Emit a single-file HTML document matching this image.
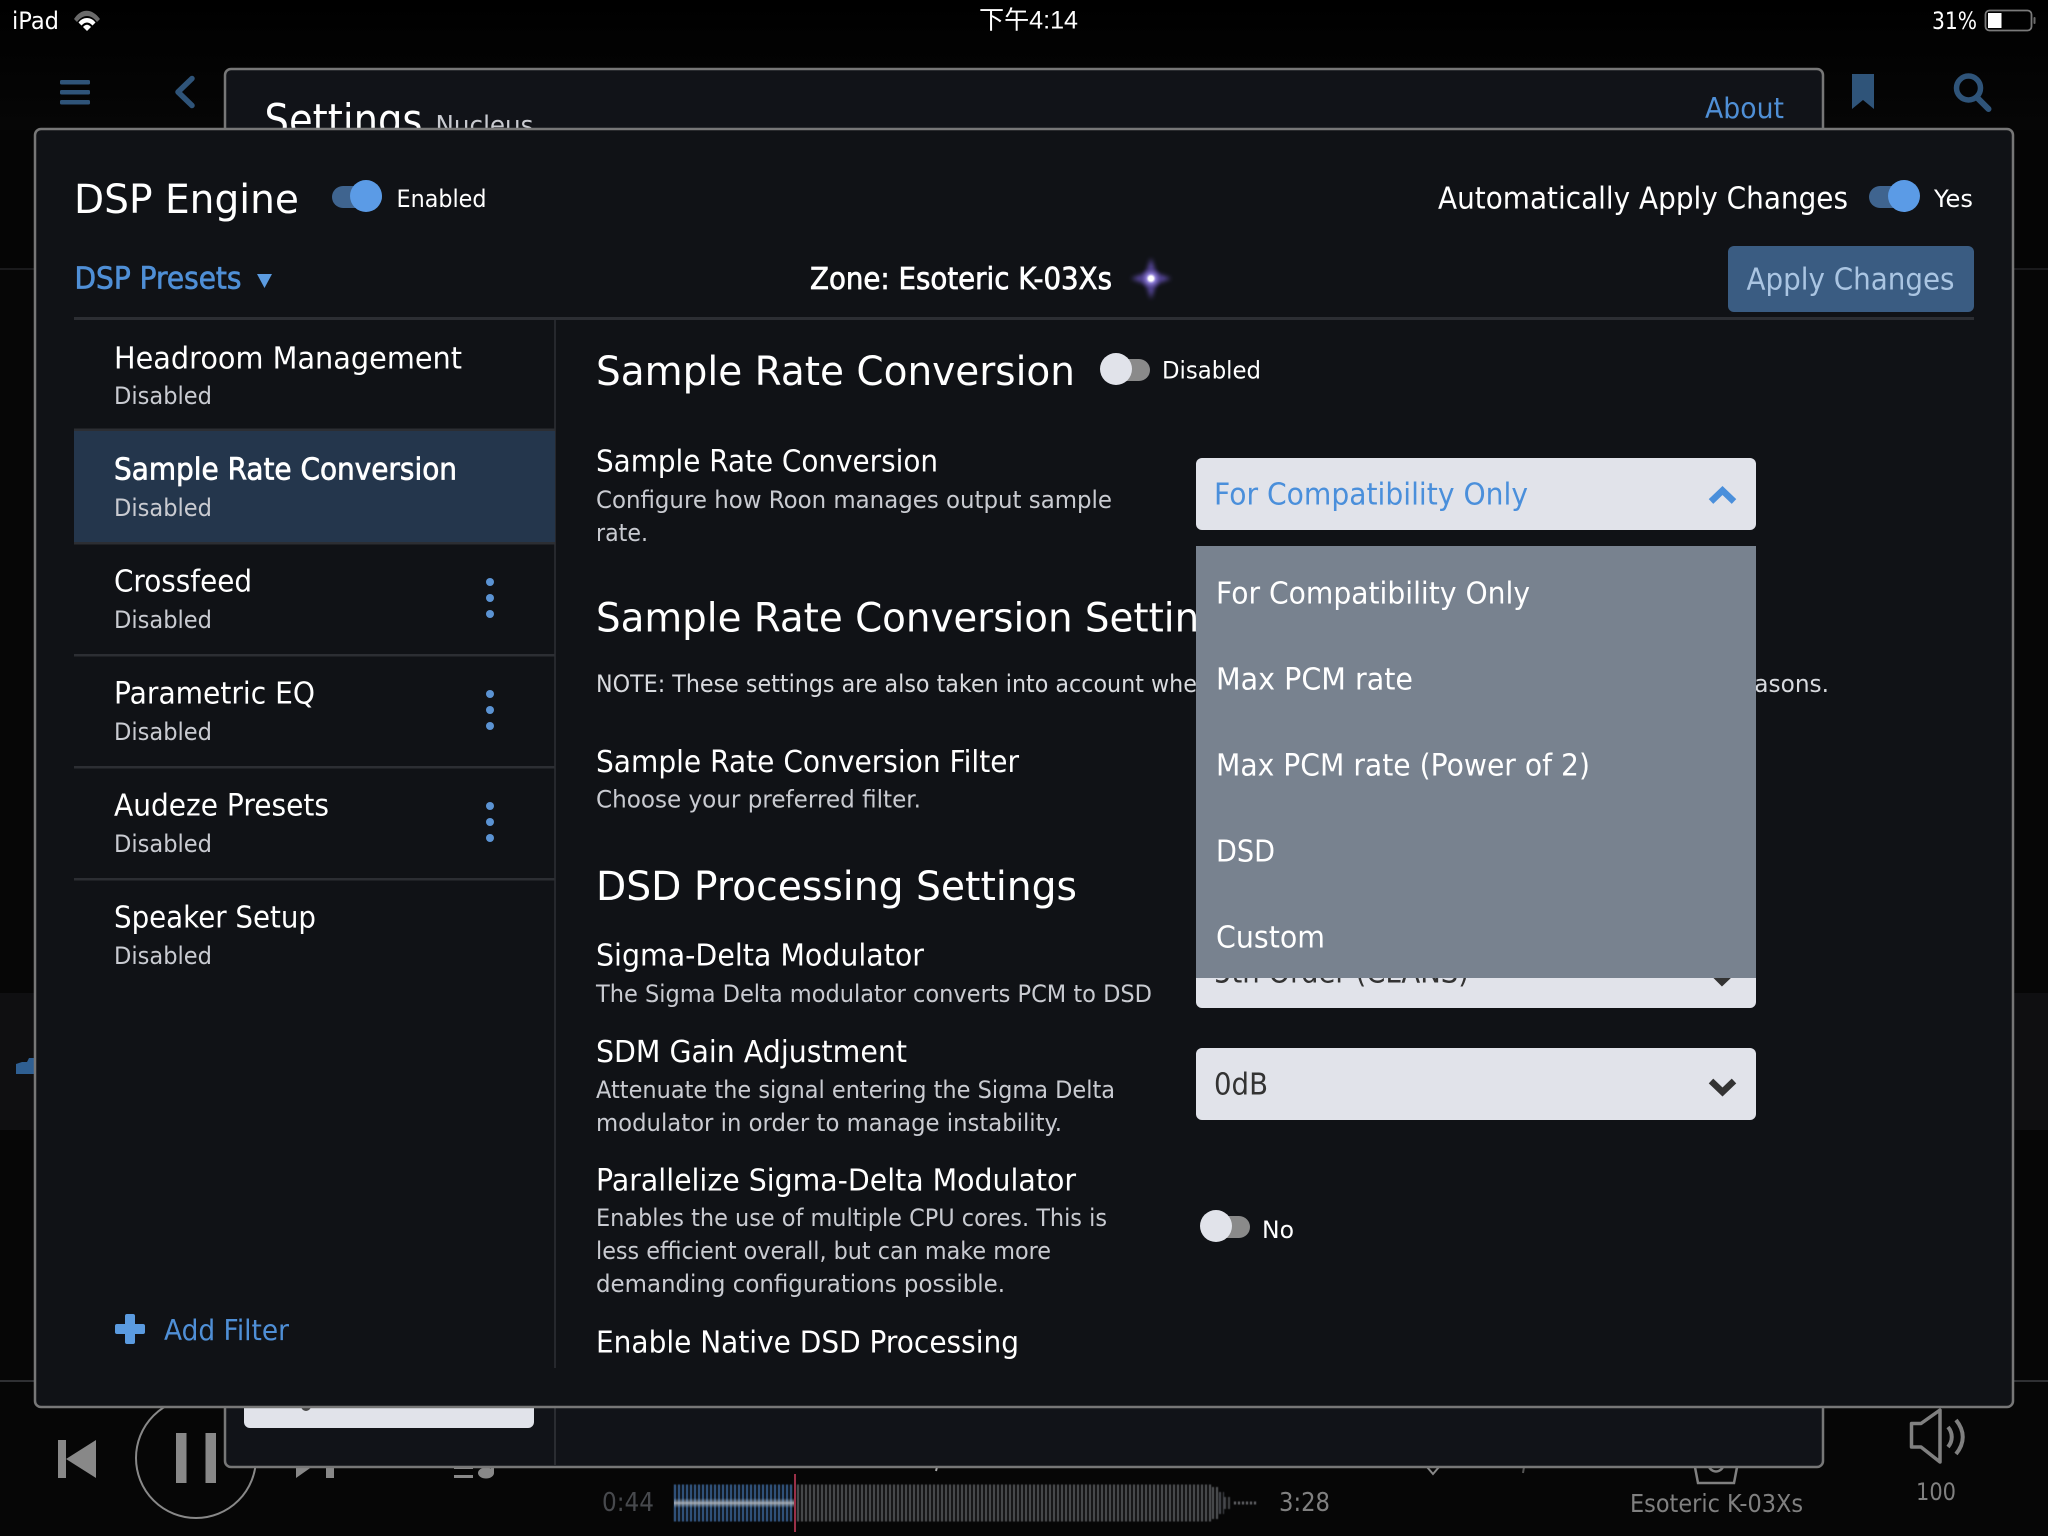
<!DOCTYPE html>
<html><head><meta charset="utf-8"><title>DSP Engine</title>
<style>
html,body{margin:0;padding:0;background:#060606;width:2048px;height:1536px;overflow:hidden}
svg{display:block}
text{font-family:"DejaVu Sans","Noto Sans CJK SC",sans-serif;fill:#fff}
.h{font-size:40px}.t{font-size:30px;transform:translateY(.6px)}.d{font-size:24px;fill:#c9cbd1}.s{font-size:24px}
.b{fill:#4f8fd6}
.m{font-size:30px;fill:#fff;transform:translateY(.6px)}
</style></head><body>
<svg width="2048" height="1536" viewBox="0 0 2048 1536" xmlns="http://www.w3.org/2000/svg">
<defs>
<linearGradient id="top" x1="0" y1="0" x2="0" y2="1"><stop offset="0" stop-color="#000"/><stop offset="1" stop-color="#060606"/></linearGradient>
<radialGradient id="star"><stop offset="0" stop-color="#fff"/><stop offset=".2" stop-color="#fff"/><stop offset=".4" stop-color="#8f7fd8" stop-opacity=".9"/><stop offset="1" stop-color="#2a1f55" stop-opacity="0"/></radialGradient>
<filter id="soft" x="-50%" y="-50%" width="200%" height="200%"><feGaussianBlur stdDeviation="2.500"/></filter>
<filter id="bar" filterUnits="userSpaceOnUse" x="660" y="1470" width="620" height="70"><feGaussianBlur stdDeviation="0.400"/></filter>
<linearGradient id="glow" x1="0" y1="0" x2="0" y2="1"><stop offset="0" stop-color="#8fa9c4" stop-opacity="0"/><stop offset=".5" stop-color="#b8bcc0" stop-opacity=".85"/><stop offset="1" stop-color="#8fa9c4" stop-opacity="0"/></linearGradient>
<clipPath id="settingsClip"><rect x="228" y="72" width="1592" height="56"/></clipPath>
</defs>
<rect width="2048" height="1536" fill="#060606"/>
<rect width="2048" height="130" fill="url(#top)"/>
<rect x="0" y="130" width="2048" height="138" fill="#050505"/>
<rect x="0" y="268" width="2048" height="2" fill="#1a1a1c"/>
<rect x="0" y="993" width="2048" height="137" fill="#0f0f11"/>
<path d="M16 1074V1064L22 1062L27 1062L29 1058L34 1058V1074Z" fill="#2f5f92"/>
<rect x="0" y="1380" width="2048" height="2" fill="#2f3033"/>

<!-- status bar -->
<text x="12" y="29" style="font-size:24px" textLength="47" lengthAdjust="spacingAndGlyphs">iPad</text>
<path d="M74 19C81 8 92 8 100 19L97 22C91 14 83 14 77 22Z" fill="#6a6a6a"/>
<path d="M78.500 22.500C83 16.500 91 16.500 95.500 22.500L92.500 25.500C89 21.500 85 21.500 81.500 25.500Z" fill="#fff"/>
<path d="M83 27C85.500 24 88.500 24 91 27L87 31Z" fill="#fff"/>
<text x="979" y="28.500" style="font-size:25px;font-family:'Liberation Sans','Noto Sans CJK SC',sans-serif" textLength="99" lengthAdjust="spacingAndGlyphs">下午4:14</text>
<text x="1932" y="29" style="font-size:24px" textLength="45" lengthAdjust="spacingAndGlyphs">31%</text>
<rect x="1985.500" y="10.500" width="46" height="20" rx="4" fill="none" stroke="#7a7a7a" stroke-width="1.800"/>
<rect x="1988" y="13" width="13.500" height="15" fill="#fff"/>
<rect x="2033.500" y="17" width="2" height="7" rx="1" fill="#6a6a6a"/>

<!-- top bar icons -->
<g fill="#2f5479"><rect x="60" y="80" width="30" height="4.500" rx="1.500"/><rect x="60" y="90" width="30" height="4.500" rx="1.500"/><rect x="60" y="100" width="30" height="4.500" rx="1.500"/></g>
<path d="M192 78.500L178 92L192 105.500" fill="none" stroke="#2f5479" stroke-width="5.500" stroke-linecap="round" stroke-linejoin="round"/>
<path d="M1852 74H1874V109L1863 100L1852 109Z" fill="#2f5479"/>
<circle cx="1968.500" cy="88" r="12" fill="none" stroke="#2f5479" stroke-width="5.500"/>
<path d="M1977.500 98L1988.500 109" stroke="#2f5479" stroke-width="6" stroke-linecap="round"/>

<!-- bottom bar (behind) -->
<g fill="#888"><rect x="58" y="1440" width="8" height="38"/><path d="M96 1440V1478L66 1459Z"/></g>
<circle cx="196" cy="1458" r="60" fill="none" stroke="#888" stroke-width="2"/>
<g fill="#888"><rect x="176" y="1433" width="10.500" height="50"/><rect x="205.500" y="1433" width="10.500" height="50"/></g>
<path d="M296 1440V1478L323 1459Z M326 1440H334V1478H326Z" fill="#888"/>
<g fill="#888"><rect x="454" y="1466" width="19" height="3"/><rect x="454" y="1475" width="19" height="3"/><ellipse cx="486" cy="1473" rx="8" ry="5.500"/><rect x="491" y="1464" width="3" height="9"/></g>
<text x="602" y="1511" style="font-size:25.500px;fill:#47494d" textLength="52" lengthAdjust="spacingAndGlyphs">0:44</text>
<g filter="url(#bar)">
<line x1="674" y1="1503" x2="794" y2="1503" stroke="#3a6496" stroke-width="37" stroke-dasharray="2 2"/>
<line x1="797" y1="1503" x2="1212" y2="1503" stroke="#56585c" stroke-width="37" stroke-dasharray="2 2"/>
<line x1="1212" y1="1503" x2="1219" y2="1503" stroke="#56585c" stroke-width="32" stroke-dasharray="2 2"/>
<line x1="1219" y1="1503" x2="1224" y2="1503" stroke="#4c4e52" stroke-width="22" stroke-dasharray="2 2"/>
<line x1="1224" y1="1503" x2="1232" y2="1503" stroke="#45474b" stroke-width="12" stroke-dasharray="2 2"/>
<line x1="1234" y1="1503" x2="1257" y2="1503" stroke="#6a6c70" stroke-width="3" stroke-dasharray="2 2"/>
</g>
<rect x="674" y="1498" width="120" height="10" fill="url(#glow)"/>
<rect x="794" y="1474" width="2" height="58" fill="#9a3048"/>
<text x="1279" y="1511" style="font-size:25.500px;fill:#808080" textLength="51" lengthAdjust="spacingAndGlyphs">3:28</text>
<path d="M937 1467L936 1471" stroke="#aaa" stroke-width="2"/>
<path d="M1427 1467L1433 1474L1439 1467" fill="none" stroke="#888" stroke-width="2"/>
<path d="M1524 1467L1523 1473" stroke="#555" stroke-width="2"/>
<path d="M1694 1462L1698 1483H1734L1738 1462" fill="none" stroke="#808080" stroke-width="2.500"/>
<circle cx="1716" cy="1464" r="7.500" fill="none" stroke="#808080" stroke-width="2.500"/>
<text x="1630" y="1512" style="font-size:25px;fill:#808080" textLength="173" lengthAdjust="spacingAndGlyphs">Esoteric K-03Xs</text>
<path d="M1911.500 1423.500H1921L1940 1410V1462L1921 1447H1911.500Z" fill="none" stroke="#808080" stroke-width="3.500" stroke-linejoin="round"/>
<path d="M1948 1427C1953 1433 1953 1441 1948 1447M1956 1420C1965 1431 1965 1443 1956 1454" fill="none" stroke="#808080" stroke-width="4"/>
<text x="1916" y="1500" style="font-size:24px;fill:#808080" textLength="40" lengthAdjust="spacingAndGlyphs">100</text>

<!-- behind panel -->
<rect x="225" y="69" width="1598" height="1398" rx="6" fill="#111318" stroke="#777" stroke-width="2.500"/>
<g clip-path="url(#settingsClip)">
<text x="264.500" y="135" style="font-size:44px" textLength="158" lengthAdjust="spacingAndGlyphs">Settings</text>
<text x="435.500" y="134" style="font-size:26px;fill:#c9cbd1" textLength="98" lengthAdjust="spacingAndGlyphs">Nucleus</text>
<text x="1705" y="118" class="b" style="font-size:28.500px" textLength="79" lengthAdjust="spacingAndGlyphs">About</text>
</g>
<rect x="244" y="1380" width="290" height="48" rx="6" fill="#e1e3ea"/>
<circle cx="306" cy="1406" r="5" fill="#444"/>
<rect x="554" y="1407" width="2" height="59" fill="#2a2c31"/>

<!-- modal -->
<rect x="35" y="129" width="1978" height="1278" rx="6" fill="#101216" stroke="#777" stroke-width="2.500"/>

<text x="74" y="213" style="font-size:40px" textLength="225" lengthAdjust="spacingAndGlyphs">DSP Engine</text>
<rect x="332" y="186" width="50" height="22" rx="11" fill="#3f648f"/>
<circle cx="366" cy="196" r="16" fill="#5b9be6"/>
<text x="396.500" y="207" class="s" textLength="90" lengthAdjust="spacingAndGlyphs">Enabled</text>

<text x="1438" y="208" class="t" textLength="410" lengthAdjust="spacingAndGlyphs">Automatically Apply Changes</text>
<rect x="1869" y="186" width="50" height="22" rx="11" fill="#3f648f"/>
<circle cx="1904" cy="196" r="16" fill="#5b9be6"/>
<text x="1934" y="207" class="s" textLength="39" lengthAdjust="spacingAndGlyphs">Yes</text>

<text x="74.500" y="288" class="t b" style="stroke:#4f8fd6;stroke-width:.7" textLength="167" lengthAdjust="spacingAndGlyphs">DSP Presets</text>
<path d="M257 274H272L264.500 288Z" fill="#5b9be0"/>
<text x="810" y="288.500" class="t" style="stroke:#fff;stroke-width:.7" textLength="302" lengthAdjust="spacingAndGlyphs">Zone: Esoteric K-03Xs</text>
<path d="M1151 258L1156 273L1171 278.500L1156 284L1151 299L1146 284L1131 278.500L1146 273Z" fill="#5a4aa0" filter="url(#soft)"/>
<circle cx="1151" cy="278.500" r="12" fill="url(#star)"/>
<rect x="1728" y="246" width="246" height="66" rx="6" fill="#3a5c82"/>
<text x="1746.500" y="289" class="t" style="fill:#aac5e2" textLength="208" lengthAdjust="spacingAndGlyphs">Apply Changes</text>

<rect x="74" y="317" width="1900" height="3" fill="#2c2e33"/>
<rect x="554" y="320" width="2" height="1048" fill="#26282d"/>

<!-- sidebar -->
<rect x="74" y="431" width="481" height="112" fill="#24364c"/>
<rect x="74" y="428.500" width="481" height="2.500" fill="#2c2e33"/>
<rect x="74" y="542" width="481" height="2.500" fill="#2c2e33"/>
<rect x="74" y="654" width="481" height="2.500" fill="#2c2e33"/>
<rect x="74" y="766" width="481" height="2.500" fill="#2c2e33"/>
<rect x="74" y="878" width="481" height="2.500" fill="#2c2e33"/>

<text x="114" y="368" class="t" textLength="348" lengthAdjust="spacingAndGlyphs">Headroom Management</text>
<text x="114" y="404" class="d" textLength="98" lengthAdjust="spacingAndGlyphs">Disabled</text>
<text x="114" y="479" class="t" style="stroke:#fff;stroke-width:.7" textLength="343" lengthAdjust="spacingAndGlyphs">Sample Rate Conversion</text>
<text x="114" y="516" class="d" textLength="98" lengthAdjust="spacingAndGlyphs">Disabled</text>
<text x="114" y="591" class="t" textLength="138" lengthAdjust="spacingAndGlyphs">Crossfeed</text>
<text x="114" y="628" class="d" textLength="98" lengthAdjust="spacingAndGlyphs">Disabled</text>
<text x="114" y="703" class="t" textLength="201" lengthAdjust="spacingAndGlyphs">Parametric EQ</text>
<text x="114" y="740" class="d" textLength="98" lengthAdjust="spacingAndGlyphs">Disabled</text>
<text x="114" y="815" class="t" textLength="215" lengthAdjust="spacingAndGlyphs">Audeze Presets</text>
<text x="114" y="852" class="d" textLength="98" lengthAdjust="spacingAndGlyphs">Disabled</text>
<text x="114" y="927" class="t" textLength="202" lengthAdjust="spacingAndGlyphs">Speaker Setup</text>
<text x="114" y="964" class="d" textLength="98" lengthAdjust="spacingAndGlyphs">Disabled</text>
<g fill="#5b93d3">
<circle cx="490" cy="582" r="4"/><circle cx="490" cy="598" r="4"/><circle cx="490" cy="614" r="4"/>
<circle cx="490" cy="694" r="4"/><circle cx="490" cy="710" r="4"/><circle cx="490" cy="726" r="4"/>
<circle cx="490" cy="806" r="4"/><circle cx="490" cy="822" r="4"/><circle cx="490" cy="838" r="4"/>
</g>
<rect x="125" y="1314" width="10" height="30" rx="2" fill="#5b9be0"/>
<rect x="115" y="1324" width="30" height="10" rx="2" fill="#5b9be0"/>
<text x="164" y="1340" class="b" style="font-size:28.500px" textLength="125" lengthAdjust="spacingAndGlyphs">Add Filter</text>

<!-- main -->
<text x="596" y="385" class="h" textLength="479" lengthAdjust="spacingAndGlyphs">Sample Rate Conversion</text>
<rect x="1110" y="359" width="40" height="22" rx="11" fill="#8a8a8a"/>
<circle cx="1116" cy="369" r="16" fill="#e1e3ea"/>
<text x="1162" y="378.500" class="s" textLength="99" lengthAdjust="spacingAndGlyphs">Disabled</text>

<text x="596" y="471" class="t" textLength="342" lengthAdjust="spacingAndGlyphs">Sample Rate Conversion</text>
<text x="596" y="508" class="d" textLength="516" lengthAdjust="spacingAndGlyphs">Configure how Roon manages output sample</text>
<text x="596" y="541" class="d" textLength="52" lengthAdjust="spacingAndGlyphs">rate.</text>

<text x="596" y="631.500" class="h" textLength="648" lengthAdjust="spacingAndGlyphs">Sample Rate Conversion Settings</text>
<text x="596" y="692" class="d" style="fill:#d8dade" textLength="615" lengthAdjust="spacingAndGlyphs">NOTE: These settings are also taken into account when</text>
<text x="1731" y="692" class="d" style="fill:#d8dade" textLength="98" lengthAdjust="spacingAndGlyphs">reasons.</text>
<text x="596" y="771.500" class="t" textLength="423" lengthAdjust="spacingAndGlyphs">Sample Rate Conversion Filter</text>
<text x="596" y="807.500" class="d" textLength="325" lengthAdjust="spacingAndGlyphs">Choose your preferred filter.</text>
<text x="596" y="900" class="h" textLength="481" lengthAdjust="spacingAndGlyphs">DSD Processing Settings</text>
<text x="596" y="965" class="t" textLength="328" lengthAdjust="spacingAndGlyphs">Sigma-Delta Modulator</text>
<text x="596" y="1002" class="d" textLength="556" lengthAdjust="spacingAndGlyphs">The Sigma Delta modulator converts PCM to DSD</text>
<text x="596" y="1061.500" class="t" textLength="311" lengthAdjust="spacingAndGlyphs">SDM Gain Adjustment</text>
<text x="596" y="1098" class="d" textLength="519" lengthAdjust="spacingAndGlyphs">Attenuate the signal entering the Sigma Delta</text>
<text x="596" y="1131" class="d" textLength="466" lengthAdjust="spacingAndGlyphs">modulator in order to manage instability.</text>
<text x="596" y="1190" class="t" textLength="480" lengthAdjust="spacingAndGlyphs">Parallelize Sigma-Delta Modulator</text>
<text x="596" y="1226" class="d" textLength="511" lengthAdjust="spacingAndGlyphs">Enables the use of multiple CPU cores. This is</text>
<text x="596" y="1259" class="d" textLength="455" lengthAdjust="spacingAndGlyphs">less efficient overall, but can make more</text>
<text x="596" y="1292" class="d" textLength="409" lengthAdjust="spacingAndGlyphs">demanding configurations possible.</text>
<text x="596" y="1352" class="t" textLength="423" lengthAdjust="spacingAndGlyphs">Enable Native DSD Processing</text>

<!-- dropdowns -->
<rect x="1196" y="936" width="560" height="72" rx="6" fill="#e1e3ea"/>
<text x="1214" y="982" class="t" style="fill:#333" textLength="255" lengthAdjust="spacingAndGlyphs">5th Order (CLANS)</text>
<path d="M1711 971L1722 982L1733.500 971" fill="none" stroke="#333" stroke-width="6.500"/>
<rect x="1196" y="458" width="560" height="72" rx="6" fill="#e1e3ea"/>
<text x="1214" y="504" class="t" style="fill:#4a8fdb" textLength="314" lengthAdjust="spacingAndGlyphs">For Compatibility Only</text>
<path d="M1711 501.500L1722.500 490.500L1734 501.500" fill="none" stroke="#4a8fdb" stroke-width="6.500"/>
<rect x="1196" y="546" width="560" height="432" fill="#78828f"/>
<text x="1216" y="603" class="m" textLength="314" lengthAdjust="spacingAndGlyphs">For Compatibility Only</text>
<text x="1216" y="689" class="m" textLength="197" lengthAdjust="spacingAndGlyphs">Max PCM rate</text>
<text x="1216" y="775" class="m" textLength="374" lengthAdjust="spacingAndGlyphs">Max PCM rate (Power of 2)</text>
<text x="1216" y="861" class="m" textLength="59" lengthAdjust="spacingAndGlyphs">DSD</text>
<text x="1216" y="947" class="m" textLength="109" lengthAdjust="spacingAndGlyphs">Custom</text>

<rect x="1196" y="1048" width="560" height="72" rx="6" fill="#e1e3ea"/>
<text x="1214" y="1094" class="t" style="fill:#333" textLength="54" lengthAdjust="spacingAndGlyphs">0dB</text>
<path d="M1711 1081L1722.500 1092L1734 1081" fill="none" stroke="#333" stroke-width="6.500"/>

<rect x="1208" y="1216" width="42" height="22" rx="11" fill="#8a8a8a"/>
<circle cx="1216" cy="1226" r="16" fill="#e1e3ea"/>
<text x="1262" y="1238" class="s" textLength="32" lengthAdjust="spacingAndGlyphs">No</text>
</svg>
</body></html>
